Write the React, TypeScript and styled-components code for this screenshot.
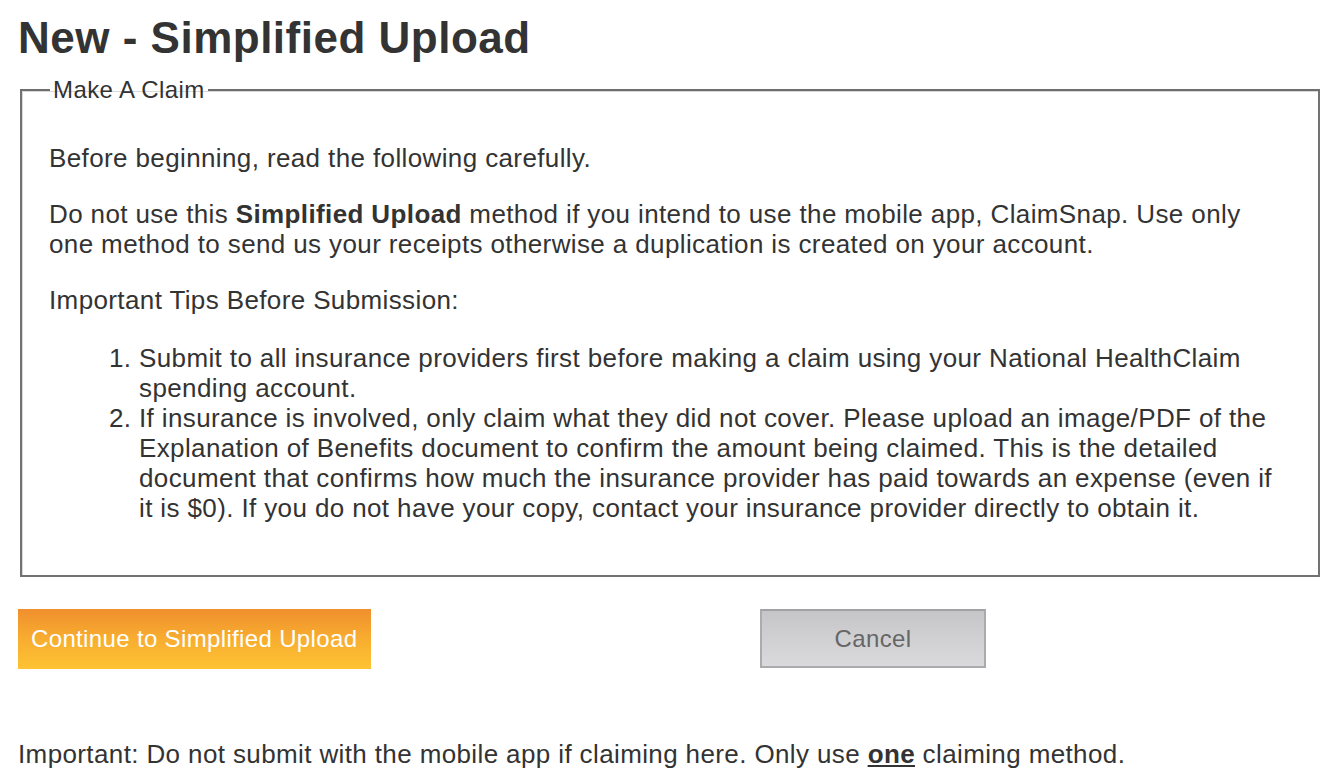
import React from "react";
import styled, { createGlobalStyle } from "styled-components";

const Global = createGlobalStyle`
  html, body { margin: 0; padding: 0; background: #ffffff; }
  body { font-family: "Liberation Sans", Arial, Helvetica, sans-serif; color: #333333; }
`;

const Page = styled.div`
  padding: 0 22px 0 18px;
`;

const Title = styled.h1`
  margin: 13px 0 13px;
  font-size: 44px;
  line-height: 50px;
  font-weight: 700;
  letter-spacing: 0.5px;
  color: #333333;
`;

const Fieldset = styled.fieldset`
  margin: 0 0 0 2px;
  padding: 13px 27px 26px 27px;
  border: 2px solid #727272;
  border-top-color: #6e6e6e;
  box-shadow: inset 1px 1px 0 #d8d8d8;
`;

const Legend = styled.legend`
  margin-left: 1px;
  padding: 0 3px 0 3px;
  font-size: 24px;
  line-height: 28px;
  letter-spacing: 0.4px;
  color: #333333;
`;

const Para = styled.p`
  margin: 26px 0;
  font-size: 26px;
  line-height: 30px;
  letter-spacing: 0.38px;
`;

const List = styled.ol`
  margin: 28px 0 26px;
  padding-left: 90px;
  font-size: 26px;
  line-height: 30px;
  letter-spacing: 0.38px;
`;

const ButtonRow = styled.div`
  display: flex;
  align-items: flex-start;
  gap: 389px;
  margin-top: 32px;
`;

const PrimaryButton = styled.button`
  width: 353px;
  height: 60px;
  padding: 0 13px;
  border: none;
  background: linear-gradient(to bottom, #f08f2e 0%, #f8ad30 50%, #fec333 100%);
  color: #ffffff;
  font-family: "Liberation Sans", Arial, sans-serif;
  font-size: 24px;
  letter-spacing: 0.35px;
  text-align: left;
  cursor: pointer;
`;

const SecondaryButton = styled.button`
  width: 226px;
  height: 59px;
  border: 2px solid #ababad;
  border-top-color: #a2a2a4;
  background: linear-gradient(to bottom, #c6c6c9 0%, #d0d0d3 50%, #dadadc 100%);
  color: #666666;
  font-family: "Liberation Sans", Arial, sans-serif;
  font-size: 24px;
  letter-spacing: 0.35px;
  cursor: pointer;
`;

const Footer = styled.p`
  margin: 70px 0 0;
  font-size: 26px;
  line-height: 30px;
  letter-spacing: 0.38px;
`;

const Emph = styled.strong`
  text-decoration: underline;
`;

export default function App() {
  return (
    <Page>
      <Global />
      <Title>New - Simplified Upload</Title>
      <Fieldset>
        <Legend>Make A Claim</Legend>
        <Para>Before beginning, read the following carefully.</Para>
        <Para>
          Do not use this <strong>Simplified Upload</strong> method if you intend to use the
          mobile app, ClaimSnap. Use only one method to send us your receipts otherwise a
          duplication is created on your account.
        </Para>
        <Para>Important Tips Before Submission:</Para>
        <List>
          <li>
            Submit to all insurance providers first before making a claim using your National
            HealthClaim spending account.
          </li>
          <li>
            If insurance is involved, only claim what they did not cover. Please upload an
            image/PDF of the Explanation of Benefits document to confirm the amount being
            claimed. This is the detailed document that confirms how much the insurance provider
            has paid towards an expense (even if it is $0). If you do not have your copy, contact
            your insurance provider directly to obtain it.
          </li>
        </List>
      </Fieldset>
      <ButtonRow>
        <PrimaryButton>Continue to Simplified Upload</PrimaryButton>
        <SecondaryButton>Cancel</SecondaryButton>
      </ButtonRow>
      <Footer>
        Important: Do not submit with the mobile app if claiming here. Only use{" "}
        <Emph>one</Emph> claiming method.
      </Footer>
    </Page>
  );
}
